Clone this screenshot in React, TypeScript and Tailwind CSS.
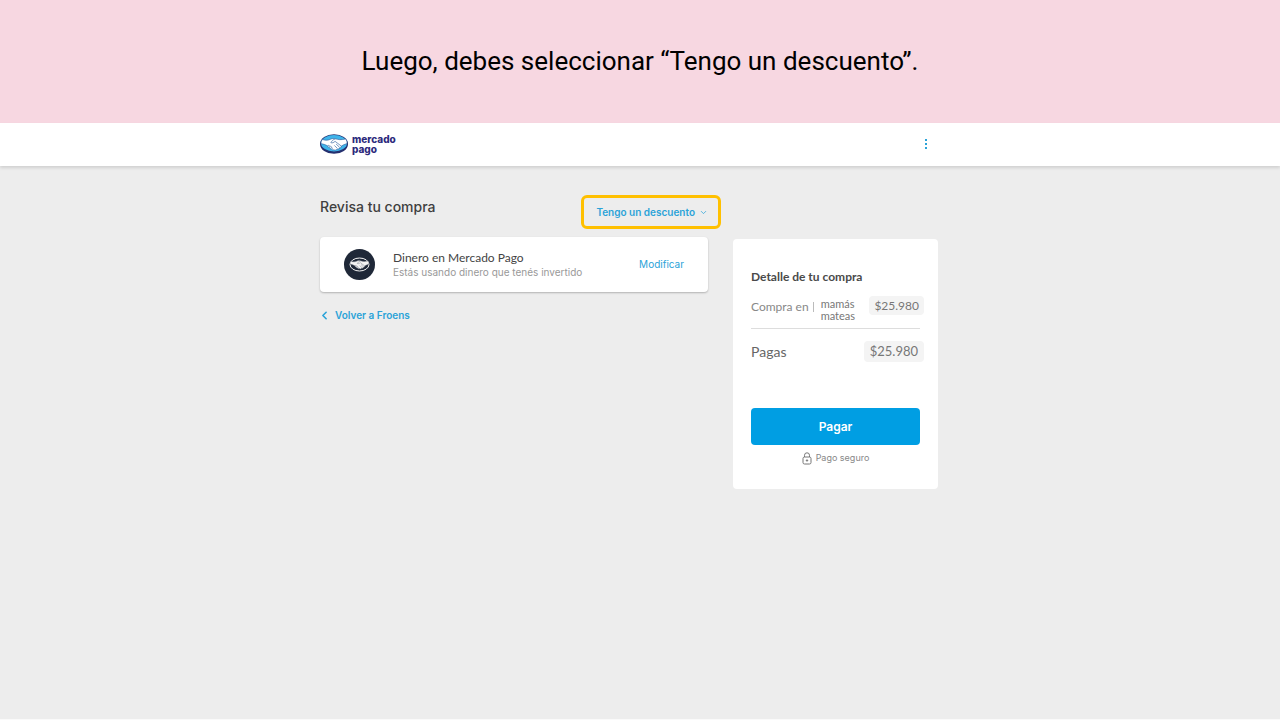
import { ChevronDown, ChevronLeft } from 'lucide-react'

function Hands() {
  return (
    <>
      <path d="M3.5 7.5C8 9.3 11.500 8.800 15 7.200C17.500 6 19.500 6 22 6.600C26 7.800 30 8.400 36.500 6.800C38.500 9 39 11.500 38.300 13.500C35 14.500 32.500 15.500 30.500 17C30.500 19 29 20 27.500 19.800C27 21.500 25.500 22 24 21.500C23 23 21 23.200 20 22.200C18 23 16.500 22 16 20.800C14.500 21 13.500 20 13.500 18.800C12 19 11 18 11.200 16.800C8.500 15.200 5 14 1.700 13.500C1.200 11.500 2 9.200 3.500 7.500Z" />
      <path d="M22 6.600C19 7.500 17 9.500 15.500 12C17.500 13 19.500 12 21.500 10.200L30.500 17M20.500 16L25 20.500M23 14L28 18.800M11.200 16.800C12 15.500 13.500 15.500 13.500 17.300C14.500 16.500 16 17 15.800 18.800C17 18.500 18 19.500 17.500 21" fill="none" />
    </>
  )
}

function Logo() {
  return (
    <a href="#" aria-label="mercado pago" className="flex items-center gap-1 text-[#2d2a7c]">
      <svg viewBox="0 0 40 28" className="h-5 w-7" fill="none">
        <ellipse cx="20" cy="14" rx="20" ry="14" fill="#25306f" />
        <ellipse cx="20" cy="13" rx="18.500" ry="11.700" fill="#3fb4ea" />
        <g fill="#fff" stroke="#2c5f9e" strokeWidth="0.900">
          <Hands />
        </g>
      </svg>
      <span className="text-[10px] leading-[10px] font-extrabold">
        mercado
        <br />
        pago
      </span>
    </a>
  )
}

function MoneyIcon() {
  return (
    <svg viewBox="0 0 62 62" className="size-[31px] shrink-0">
      <circle cx="31" cy="31" r="31" fill="#1f2838" />
      <ellipse cx="31" cy="31" rx="19" ry="13" fill="none" stroke="#f4f4f4" strokeWidth="2" />
      <g transform="translate(11 17)" fill="#f4f4f4" stroke="#59616d" strokeWidth="0.800">
        <Hands />
      </g>
    </svg>
  )
}

function LockIcon() {
  return (
    <svg viewBox="0 0 10 13" className="h-[13px] w-[10px]" fill="none" stroke="#777" strokeWidth="1">
      <path d="M2.500 5V3.300a2.500 2.500 0 0 1 5 0V5" />
      <rect x="1" y="5" width="8" height="7" rx="1.500" />
      <circle cx="5" cy="8.500" r="0.700" fill="#777" />
    </svg>
  )
}

function Header() {
  return (
    <header className="bg-white shadow-[0_2px_3px_rgba(0,0,0,0.12)]">
      <div className="mx-auto flex h-[43px] max-w-[640px] items-center justify-between pr-8 pb-[2px]">
        <Logo />
        <button aria-label="Más opciones" className="flex w-1 flex-col items-center gap-[2px]">
          <span className="size-[2px] bg-[#2ba3d8]" />
          <span className="size-[2px] bg-[#2ba3d8]" />
          <span className="size-[2px] bg-[#2ba3d8]" />
        </button>
      </div>
    </header>
  )
}

function PaymentMethod() {
  return (
    <section className="flex h-[55px] items-center rounded bg-white px-6 shadow-[0_1px_2px_rgba(0,0,0,0.25)]">
      <MoneyIcon />
      <div className="ml-[18px] flex-1">
        <h2 className="font-['Lato',sans-serif] text-[12px] leading-[14px] text-[#444]">Dinero en Mercado Pago</h2>
        <p className="text-[10px] leading-[14px] text-[#999]">Estás usando dinero que tenés invertido</p>
      </div>
      <button className="text-[10px] text-[#2ba3d8]">Modificar</button>
    </section>
  )
}

function Summary() {
  return (
    <aside className="mt-[73px] w-[205px] shrink-0 self-start rounded bg-white px-[18px] pt-[30px] pb-6 font-['Lato',sans-serif]">
      <h2 className="text-[12px] leading-4 font-bold text-[#4a4a4a]">Detalle de tu compra</h2>
      <div className="mt-[11px] flex h-[33px] items-start border-b border-[#ddd]">
        <span className="mt-[5px] text-[12px] leading-3 whitespace-nowrap text-[#888]">Compra en</span>
        <span className="mt-[6px] ml-1 h-[10px] w-px bg-[#bbb]" />
        <span className="mt-[2px] ml-[7px] text-[11px] leading-3 text-[#777]">
          mamás
          <br />
          mateas
        </span>
        <span className="-mr-1 ml-auto rounded bg-[#f4f4f4] px-[5px] text-[12px] leading-[19px] text-[#777]">
          $25.980
        </span>
      </div>
      <div className="mt-3 flex items-center justify-between">
        <span className="text-[14px] leading-[21px] text-[#666]">Pagas</span>
        <span className="-mr-1 rounded bg-[#f4f4f4] px-[6px] text-[13px] leading-[21px] text-[#777]">
          $25.980
        </span>
      </div>
      <button className="mt-[46px] h-[37px] w-full rounded bg-[#009ee3] font-['Inter',sans-serif] text-[12px] font-semibold text-white">
        Pagar
      </button>
      <p className="mt-[6px] flex items-center justify-center gap-1 font-['Inter',sans-serif] text-[9px] leading-[14px] text-[#888]">
        <LockIcon />
        Pago seguro
      </p>
    </aside>
  )
}

export default function App() {
  return (
    <div className="flex min-h-screen flex-col bg-[#ededed] font-['Inter',sans-serif]">
      <div className="flex h-[123px] items-center justify-center bg-[#f7d7e1] px-4 text-center font-['Roboto',sans-serif] text-[26px] text-black">
        Luego, debes seleccionar “Tengo un descuento”.
      </div>
      <Header />
      <main className="mx-auto flex w-full max-w-[640px] flex-1 gap-[25px] pr-[22px]">
        <div className="min-w-0 flex-1">
          <div className="flex h-[71px] items-start justify-between pt-[29px]">
            <h1 className="text-[14px] leading-6 font-medium text-[#3f3f3f]">Revisa tu compra</h1>
            <button className="-mr-[13px] flex h-[34px] w-[140px] shrink-0 items-center justify-end gap-1 rounded-md border-3 border-[#ffc000] pr-[10px] text-[10px] font-semibold whitespace-nowrap text-[#2ba3d8]">
              Tengo un descuento
              <ChevronDown className="size-[9px]" />
            </button>
          </div>
          <PaymentMethod />
          <a href="#" className="mt-4 inline-flex items-center gap-1 text-[10px] leading-[14px] font-semibold text-[#2ba3d8]">
            <ChevronLeft className="-ml-[2px] size-[13px]" strokeWidth={3} />
            Volver a Froens
          </a>
        </div>
        <Summary />
      </main>
      <div className="h-px bg-[#fafafa]" />
    </div>
  )
}
